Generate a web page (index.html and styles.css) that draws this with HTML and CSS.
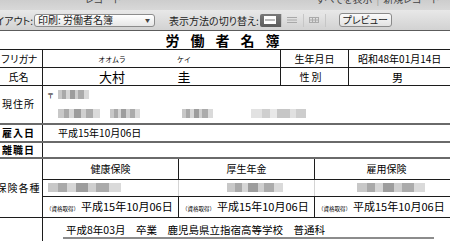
FILE: index.html
```html
<!DOCTYPE html>
<html lang='ja'>

<head>
  <meta charset='UTF-8'>
  <meta name='viewport' content='width=device-width, initial-scale=1.0'>
  <title>労働者名簿</title>
  <link rel="stylesheet" href="styles.css">
</head>

<body>
  <div class='topstrip'>
    <span class='strip-rec'>レコード</span>
    <span class='strip-all'>すべてを表示</span>
    <span class='strip-sep'>|</span>
    <span class='strip-new'>新規レコード</span>
    <span class='strip-more'>以</span>
  </div>

  <div class='toolbar'>
    <div class='layout-label'><span>レイアウト:</span></div>
    <div class='popup'>
      <span>印刷: 労働者名簿</span>
      <span class='popup-arrow'>▼</span>
    </div>
    <div class='view-label'>表示方法の切り替え:</div>
    <div class='segmented'>
      <div class='seg seg-on'>
        <svg width='12' height='8' viewBox='0 0 12 8'>
          <rect x='0.5' y='0.5' width='11' height='7' fill='#fff' stroke='#fff' />
          <line x1='1' y1='4' x2='11' y2='4' stroke='#777' stroke-width='1' />
        </svg>
      </div>
      <div class='seg'>
        <svg width='12' height='8' viewBox='0 0 12 8'>
          <line x1='1' y1='1.5' x2='11' y2='1.5' stroke='#a8a8a8' />
          <line x1='1' y1='4' x2='11' y2='4' stroke='#a8a8a8' />
          <line x1='1' y1='6.5' x2='11' y2='6.5' stroke='#a8a8a8' />
        </svg>
      </div>
      <div class='seg'>
        <svg width='12' height='8' viewBox='0 0 12 8'>
          <rect x='1.5' y='1.5' width='9' height='5' fill='none' stroke='#aaa' />
          <line x1='4.5' y1='1.5' x2='4.5' y2='6.5' stroke='#aaa' />
          <line x1='7.5' y1='1.5' x2='7.5' y2='6.5' stroke='#aaa' />
          <line x1='1.5' y1='4' x2='10.5' y2='4' stroke='#aaa' />
        </svg>
      </div>
    </div>
    <div class='preview-button'>プレビュー</div>
  </div>

  <div class='sheet'>
    <div class='title'>労働者名簿</div>
    <table class='roster'>
      <colgroup>
        <col class='c-label'>
        <col class='c-a'>
        <col class='c-b'>
        <col class='c-c'>
        <col class='c-d'>
        <col class='c-e'>
      </colgroup>
      <tr class='r-kana'>
        <td class='label narrow'>フリガナ</td>
        <td colspan='2'>
          <div class='name-pair kana'>
            <span class='sei'>オオムラ</span>
            <span class='mei'>ケイ</span>
          </div>
        </td>
        <td colspan='2' class='sublabel'>生年月日</td>
        <td class='birth'>昭和48年01月14日</td>
      </tr>
      <tr class='r-name'>
        <td class='label'>氏名</td>
        <td colspan='2'>
          <div class='name-pair kanji'>
            <span class='sei'>大村</span>
            <span class='mei'>圭</span>
          </div>
        </td>
        <td colspan='2' class='sublabel spaced'>性別</td>
        <td class='sex'>男</td>
      </tr>
      <tr class='r-addr'>
        <td class='label spaced'>現住所</td>
        <td colspan='5' class='addr'>
          <div class='addr-line'>
            <span class='zip'>〒</span>
            <span class='mosaic' style='width: 31px'></span>
          </div>
          <div class='addr-line second'>
            <span class='mosaic' style='width: 42px'></span>
            <span class='mosaic' style='width: 30px; margin-left: 10px'></span>
            <span class='mosaic' style='width: 31px; margin-left: 42px'></span>
            <span class='mosaic light' style='width: 55px; margin-left: 38px'></span>
          </div>
        </td>
      </tr>
      <tr class='r-date'>
        <td class='label bold spaced'>雇入日</td>
        <td colspan='5' class='plain'>平成15年10月06日</td>
      </tr>
      <tr class='r-leave'>
        <td class='label bold spaced'>離職日</td>
        <td colspan='5'></td>
      </tr>
      <tr class='r-ins-head'>
        <td rowspan='3' class='label spaced'>保険各種</td>
        <td class='ins-head'>健康保険</td>
        <td colspan='2' class='ins-head'>厚生年金</td>
        <td colspan='2' class='ins-head'>雇用保険</td>
      </tr>
      <tr class='r-ins-num'>
        <td class='ins-num'><span class='mosaic' style='width: 73px'></span></td>
        <td colspan='2' class='ins-num'><span class='mosaic' style='width: 56px; margin-left: 43px'></span></td>
        <td colspan='2' class='ins-num last'><span class='mosaic' style='width: 68px; margin-left: 37px'></span></td>
      </tr>
      <tr class='r-ins-date'>
        <td class='ins-date'><span class='tag'>（資格取得）</span>平成15年10月06日</td>
        <td colspan='2' class='ins-date'><span class='tag'>（資格取得）</span>平成15年10月06日</td>
        <td colspan='2' class='ins-date'><span class='tag'>（資格取得）</span>平成15年10月06日</td>
      </tr>
      <tr class='r-school'>
        <td class='label'></td>
        <td colspan='5' class='school'>
          <div class='school-line'>平成8年03月　卒業　鹿児島県立指宿高等学校　普通科</div>
        </td>
      </tr>
    </table>
  </div>
</body>

</html>
```

FILE: styles.css
```css
html,
body {
  margin: 0;
}

body {
  width: 450px;
  height: 241px;
  overflow: hidden;
  background-color: #fff;
  color: #000;
  font-family: "Noto Sans CJK JP", "Noto Sans", sans-serif;
}

/* 上の帯（途中で切れている） */
.topstrip {
  height: 10px;
  display: flex;
  overflow: hidden;
  background: linear-gradient(#cdcdcd, #d8d8d8);
  font-size: 10px;
  line-height: 14px;
  color: #444;
  font-feature-settings: "palt";
}

.topstrip span {
  margin-top: -8px;
  white-space: nowrap;
}

.strip-rec {
  margin-left: 85px;
}

.strip-all {
  margin-left: 195px;
}

.strip-sep {
  margin-left: 4px;
  color: #999;
}

.strip-new {
  margin-left: 4px;
}

.strip-more {
  margin-left: 20px;
}

.toolbar {
  height: 20px;
  display: flex;
  align-items: center;
  background: linear-gradient(#e8e8e8, #d2d2d2);
  border-bottom: 1px solid #5c5c5c;
  font-size: 10px;
  color: #222;
  font-feature-settings: "palt";
  white-space: nowrap;
}

.layout-label {
  width: 33px;
  display: flex;
  justify-content: flex-end;
  overflow: hidden;
}

.popup {
  width: 121px;
  height: 13px;
  margin-left: 1px;
  display: flex;
  justify-content: space-between;
  align-items: center;
  padding: 0 4px 0 3px;
  box-sizing: border-box;
  border: 1px solid #8c8c8c;
  border-radius: 3px;
  background: linear-gradient(#ffffff, #e6e6e6);
  line-height: 12px;
}

.popup-arrow {
  font-size: 5px;
  color: #444;
}

.view-label {
  margin-left: 14px;
}

.segmented {
  margin-left: 1px;
  display: flex;
  height: 13px;
}

.seg {
  width: 21px;
  height: 13px;
  display: flex;
  justify-content: center;
  align-items: center;
  background: linear-gradient(#e6e6e6, #d4d4d4);
  border-right: 1px solid #c6c6c6;
}

.seg-on {
  background: linear-gradient(#7a7a7a, #5c5c5c);
  border-radius: 2px 0 0 2px;
}

.preview-button {
  width: 53px;
  height: 14px;
  margin-left: 13px;
  box-sizing: border-box;
  display: flex;
  justify-content: center;
  align-items: center;
  border: 1px solid #8a8a8a;
  border-radius: 3px;
  background: linear-gradient(#fbfbfb, #e2e2e2);
  line-height: 12px;
}

.title {
  height: 18px;
  line-height: 18px;
  text-align: center;
  font-size: 14px;
  font-weight: bold;
  letter-spacing: 11px;
  padding-left: 6px;
}

.roster {
  margin-left: -6px;
  width: 464px;
  table-layout: fixed;
  border-collapse: collapse;
  font-size: 10px;
}

.c-label {
  width: 48px;
}

.c-a {
  width: 136px;
}

.c-b {
  width: 102px;
}

.c-c,
.c-d {
  width: 34px;
}

.c-e {
  width: 110px;
}

.roster td {
  border: 1px solid #1c1c1c;
  padding: 0;
  line-height: 12px;
  vertical-align: middle;
}

.r-kana {
  height: 18px;
}

.r-name {
  height: 18px;
}

.r-addr {
  height: 38px;
}

.r-date {
  height: 18px;
}

.r-leave {
  height: 16px;
}

.r-ins-head {
  height: 22px;
}

.r-ins-num {
  height: 17px;
}

.r-ins-date {
  height: 21px;
}

.r-school {
  height: 26px;
}

.r-addr td,
.r-date td,
.r-leave td {
  border-bottom: 2px solid #6a6a6a;
}

.label {
  text-align: center;
}

.label.narrow {
  letter-spacing: -1px;
}

.label.spaced {
  letter-spacing: 1px;
}

.label.bold {
  font-weight: bold;
}

.sublabel {
  text-align: center;
}

.sublabel.spaced {
  letter-spacing: 2px;
  padding-right: 6px !important;
}

.birth {
  padding-left: 9px !important;
}

.sex {
  text-align: center;
  font-size: 11px;
  padding-right: 12px !important;
}

.name-pair {
  display: flex;
  padding-left: 30px;
}

.name-pair .sei {
  width: 78px;
  text-align: center;
}

.name-pair .mei {
  width: 66px;
  text-align: center;
}

.kana {
  font-size: 7px;
}

.kanji {
  font-size: 13px;
  line-height: 16px;
}

.addr {
  padding-left: 4px !important;
}

.addr-line {
  display: flex;
  align-items: center;
  height: 10px;
}

.addr-line.second {
  margin-top: 9px;
  padding-left: 11px;
}

.zip {
  font-size: 7px;
  width: 11px;
}

.mosaic {
  display: inline-block;
  height: 9px;
  background:
    linear-gradient(90deg, #c8c8c8 0 14%, #a9a9a9 14% 26%, #d6d6d6 26% 38%, #9d9d9d 38% 55%, #cfcfcf 55% 66%, #ababab 66% 84%, #dadada 84% 100%);
  filter: blur(0.6px);
}

.mosaic.light {
  background:
    linear-gradient(90deg, #e2e2e2 0 20%, #cfcfcf 20% 35%, #e8e8e8 35% 48%, #c6c6c6 48% 70%, #e0e0e0 70% 82%, #cdcdcd 82% 100%);
}

.plain {
  padding-left: 15px !important;
}

.ins-head {
  text-align: center;
}

.r-ins-num td.ins-num {
  padding-left: 5px;
  border-right-color: #d4d4d4;
}

.r-ins-num td.ins-num.last {
  border-right-color: #1c1c1c;
}

.ins-date {
  font-size: 11px;
  padding-left: 3px !important;
  white-space: nowrap;
}

.tag {
  font-size: 5.5px;
  margin-right: 2px;
}

.school {
  padding-left: 20px !important;
}

.school-line {
  width: 368px;
  font-size: 10.5px;
  line-height: 14px;
  border-bottom: 2px solid #8c8c8c;
  padding-left: 3px;
}
```
